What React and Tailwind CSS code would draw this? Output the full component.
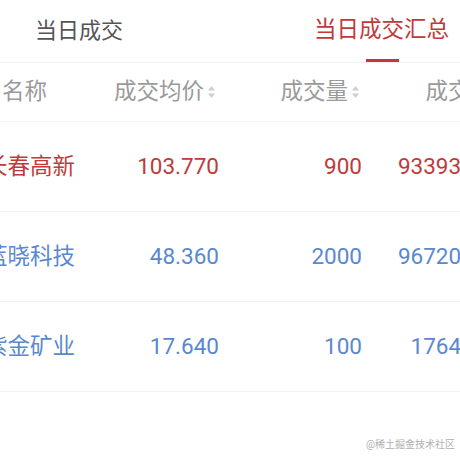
import React from "react";

const font = { fontFamily: "Roboto, 'Noto Sans CJK SC', sans-serif" };

const rows = [
  { name: "长春高新", price: "103.770", vol: "900", amount: "93393.000", up: true },
  { name: "蓝晓科技", price: "48.360", vol: "2000", amount: "96720.000", up: false },
  { name: "紫金矿业", price: "17.640", vol: "100", amount: "1764.000", up: false },
];

function SortIcon() {
  return (
    <svg width="9" height="14" viewBox="0 0 9 14" className="ml-[3px]">
      <path d="M4.5 1 L8 5.5 L1 5.5 Z" fill="#cfcfcf" />
      <path d="M4.5 13 L8 8.5 L1 8.5 Z" fill="#cfcfcf" />
    </svg>
  );
}

export default function App() {
  return (
    <div className="w-[460px] h-[460px] bg-white relative overflow-hidden" style={font}>
      {/* Tabs */}
      <div className="h-[63px] flex items-center border-b border-[#f0f0f0]">
        <div className="pl-[35px] text-[22px] text-[#555] pb-[2px]">当日成交</div>
        <div className="ml-auto mr-[11px] relative h-full flex items-center">
          <span className="text-[22.5px] text-[#c13a3b] pb-[2px]">当日成交汇总</span>
          <div className="absolute bottom-0 left-[52px] w-[33px] h-[3px] bg-[#c13a3b]" />
        </div>
      </div>

      {/* Header */}
      <div className="grid grid-cols-[90px_130px_142px_143px] h-[59px] items-center border-b border-[#f2f2f2] text-[22.5px] text-[#9a9a9a]">
        <div className="pl-[2px]">名称</div>
        <div className="flex items-center justify-end pr-[4px]">
          成交均价
          <SortIcon />
        </div>
        <div className="flex items-center justify-end pr-[2px]">
          成交量
          <SortIcon />
        </div>
        <div className="flex items-center justify-end">
          成交额
          <SortIcon />
        </div>
      </div>

      {/* Rows */}
      {rows.map((r) => {
        const color = r.up ? "text-[#c13a3b]" : "text-[#5a88cf]";
        return (
          <div
            key={r.name}
            className={`grid grid-cols-[90px_130px_142px_143px] h-[90px] items-center border-b border-[#f2f2f2] text-[22.5px] ${color}`}
          >
            <div className="ml-[-15px] whitespace-nowrap">{r.name}</div>
            <div className="text-right pr-[1px]">{r.price}</div>
            <div className="text-right">{r.vol}</div>
            <div className="text-right whitespace-nowrap">{r.amount}</div>
          </div>
        );
      })}

      <div className="absolute right-[5px] bottom-[8px] text-[10px] text-[#b0b0b0]">
        @稀土掘金技术社区
      </div>
    </div>
  );
}
